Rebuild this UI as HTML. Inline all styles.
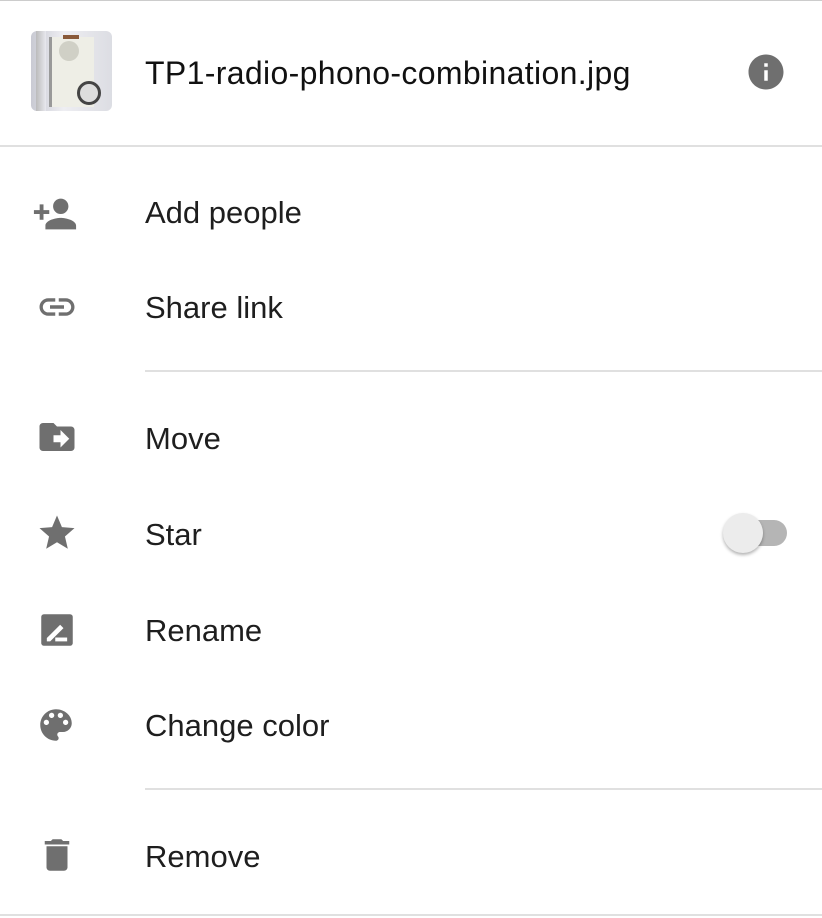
<!DOCTYPE html>
<html><head><meta charset="utf-8"><style>
html,body{margin:0;padding:0;background:#fff;width:822px;height:918px;overflow:hidden;font-family:"Liberation Sans",sans-serif;}
.abs{position:absolute}
.line{position:absolute;height:2px;background:#e0e0e0}
.txt{position:absolute;left:145px;font-size:31px;color:#1e1e1e;line-height:1;}
svg.ic{position:absolute;width:42px;height:42px;fill:#6f6f6f}
</style></head><body>
<div class="line" style="top:0;left:0;width:822px;height:1px;background:#ccc"></div>
<div class="abs" style="left:31px;top:31px;width:81px;height:80px;border-radius:6px;background:linear-gradient(90deg,#c9cad3,#eeeef2 40%,#dcdde3);overflow:hidden">
 <div class="abs" style="left:5px;top:0;width:10px;height:80px;background:linear-gradient(90deg,#bbb,#e8e8ee)"></div>
 <div class="abs" style="left:18px;top:6px;width:42px;height:70px;background:#eeeee6;border-left:3px solid #999"></div>
 <div class="abs" style="left:32px;top:4px;width:16px;height:4px;background:#8a5a3a"></div>
 <div class="abs" style="left:28px;top:10px;width:20px;height:20px;border-radius:50%;background:#d0d0c6"></div>
 <div class="abs" style="left:46px;top:50px;width:24px;height:24px;border-radius:50%;background:#ddd;border:3px solid #444;box-sizing:border-box"></div>
</div>
<div class="abs" style="left:145px;top:55px;font-size:32px;color:#111;letter-spacing:0.35px">TP1-radio-phono-combination.jpg</div>
<svg class="ic" style="left:745px;top:51px" viewBox="0 0 24 24"><path d="M12 2C6.48 2 2 6.48 2 12s4.48 10 10 10 10-4.48 10-10S17.52 2 12 2zm1 15h-2v-6h2v6zm0-8h-2V7h2v2z"/></svg>
<div class="line" style="top:145px;left:0;width:822px"></div>

<svg class="ic" style="left:32px;top:191px;width:46px;height:46px" viewBox="0 0 24 24"><path d="M15 12c2.21 0 4-1.790 4-4s-1.79-4-4-4-4 1.79-4 4 1.79 4 4 4zm-9-2V7H4v3H1v2h3v3h2v-3h3v-2H6zm9 4c-2.67 0-8 1.34-8 4v2h16v-2c0-2.66-5.33-4-8-4z"/></svg>
<div class="txt" style="top:197px">Add people</div>
<svg class="ic" style="left:36px;top:286px" viewBox="0 0 24 24"><path d="M3.9 12c0-1.71 1.39-3.1 3.1-3.1h4V7H7c-2.76 0-5 2.24-5 5s2.24 5 5 5h4v-1.9H7c-1.71 0-3.1-1.39-3.1-3.1zM8 13h8v-2H8v2zm9-6h-4v1.9h4c1.71 0 3.1 1.39 3.1 3.1s-1.39 3.1-3.1 3.1h-4V17h4c2.76 0 5-2.24 5-5s-2.24-5-5-5z"/></svg>
<div class="txt" style="top:292px">Share link</div>
<div class="line" style="top:370px;left:145px;width:677px"></div>

<svg class="ic" style="left:36px;top:416px" viewBox="0 0 24 24"><path d="M20 6h-8l-2-2H4c-1.1 0-2 .9-2 2v12c0 1.1.9 2 2 2h16c1.1 0 2-.9 2-2V8c0-1.1-.9-2-2-2zm-6 12v-3h-4v-4h4V8l5 5-5 5z"/></svg>
<div class="txt" style="top:423px">Move</div>
<svg class="ic" style="left:36px;top:512px" viewBox="0 0 24 24"><path d="M12 17.27L18.18 21l-1.64-7.03L22 9.24l-7.19-.61L12 2 9.19 8.63 2 9.24l5.46 4.73L5.82 21z"/></svg>
<div class="txt" style="top:519px">Star</div>
<div class="abs" style="left:725px;top:520px;width:62px;height:26px;border-radius:13px;background:#b5b5b5"></div>
<div class="abs" style="left:723px;top:513px;width:40px;height:40px;border-radius:50%;background:#ececec;box-shadow:0 2px 3px rgba(0,0,0,.3)"></div>
<svg class="ic" style="left:36px;top:609px" viewBox="0 0 24 24"><rect x="3" y="3" width="18" height="18" rx="1.5"/><path d="M6.2 16.6l7.6-7.6 1.9 1.9-7.6 7.6H6.2z" fill="#fff"/><rect x="11" y="16.3" width="6.8" height="2.2" fill="#fff"/></svg>
<div class="txt" style="top:615px">Rename</div>
<svg class="ic" style="left:35px;top:704px" viewBox="0 0 24 24"><path d="M12 3c-4.97 0-9 4.030-9 9s4.03 9 9 9c.83 0 1.5-.67 1.5-1.5 0-.39-.15-.74-.39-1.01-.23-.26-.38-.61-.38-.99 0-.83.67-1.5 1.5-1.5H16c2.76 0 5-2.24 5-5 0-4.42-4.03-8-9-8zm-5.5 9c-.83 0-1.5-.67-1.5-1.5S5.67 9 6.5 9 8 9.67 8 10.5 7.33 12 6.5 12zm3-4C8.67 8 8 7.33 8 6.5S8.67 5 9.5 5s1.5.67 1.5 1.5S10.33 8 9.5 8zm5 0c-.83 0-1.5-.67-1.5-1.5S13.67 5 14.5 5s1.5.67 1.5 1.5S15.33 8 14.5 8zm3 4c-.83 0-1.5-.67-1.5-1.5S16.67 9 17.5 9s1.5.67 1.5 1.5-.67 1.5-1.5 1.5z"/></svg>
<div class="txt" style="top:710px">Change color</div>
<div class="line" style="top:788px;left:145px;width:677px"></div>

<svg class="ic" style="left:36px;top:834px" viewBox="0 0 24 24"><path d="M6 19c0 1.1.9 2 2 2h8c1.1 0 2-.9 2-2V7H6v12zM19 4h-3.5l-1-1h-5l-1 1H5v2h14V4z"/></svg>
<div class="txt" style="top:841px">Remove</div>
<div class="line" style="top:914px;left:0;width:822px"></div>
</body></html>
